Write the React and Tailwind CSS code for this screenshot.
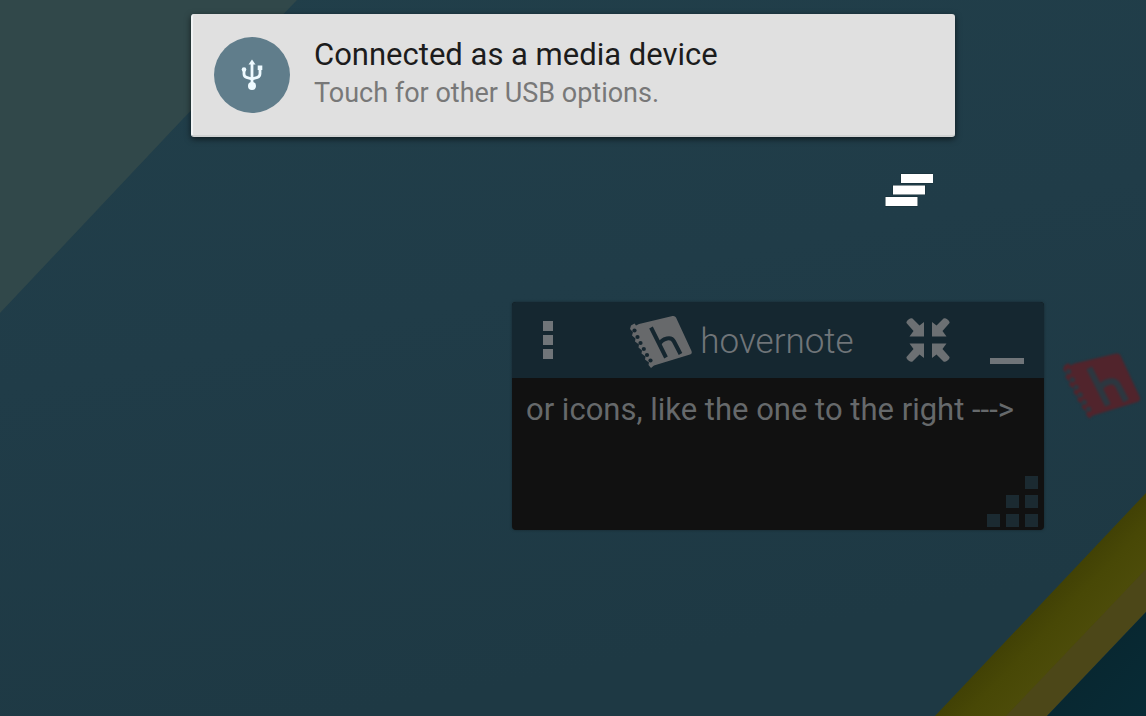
import React from "react";

function Wallpaper() {
  return (
    <svg
      className="absolute inset-0 h-full w-full"
      viewBox="0 0 1146 716"
      preserveAspectRatio="xMidYMid slice"
      aria-hidden="true"
    >
      <defs>
        <linearGradient id="sea" x1="0" y1="0" x2="0.3" y2="1">
          <stop offset="0" stopColor="#213f4a" />
          <stop offset="0.5" stopColor="#203c48" />
          <stop offset="1" stopColor="#1e3944" />
        </linearGradient>
        <linearGradient id="band" gradientUnits="userSpaceOnUse" x1="1030" y1="610" x2="1085" y2="662">
          <stop offset="0" stopColor="#404005" />
          <stop offset="0.35" stopColor="#484806" />
          <stop offset="1" stopColor="#4f4e0b" />
        </linearGradient>
        <linearGradient id="deep" x1="0" y1="0" x2="1" y2="1">
          <stop offset="0" stopColor="#08242c" />
          <stop offset="1" stopColor="#082b36" />
        </linearGradient>
      </defs>
      <rect width="1146" height="716" fill="url(#sea)" />
      <path d="M0 0H297L180 122L0 313Z" fill="#31484a" />
      <path d="M1146 493V572L1007 716H935Z" fill="url(#band)" />
      <path d="M1146 569V612L1047 716H1006Z" fill="#4c4718" />
      <path d="M1146 612V716H1047Z" fill="url(#deep)" />
    </svg>
  );
}

function UsbIcon() {
  return (
    <svg className="h-8 w-6" viewBox="0 0 24 32" fill="none" stroke="#eefaff" strokeWidth="2.8" aria-hidden="true">
      <path d="M12 4V27M4 10.500V15Q4 17.500 6.500 18.300L12 20M20 10V14.500Q20 17.500 17.500 18.300L12 20" />
      <circle cx="12" cy="27" r="4" fill="#eefaff" stroke="none" />
      <path d="M12 .5L15.500 5.500H8.500Z" fill="#eefaff" stroke="none" />
      <circle cx="4" cy="10.500" r="2.300" fill="#eefaff" stroke="none" />
      <path d="M17.700 6.500H22.300V11H17.700Z" fill="#eefaff" stroke="none" />
    </svg>
  );
}

function Notification() {
  return (
    <button
      type="button"
      className="flex w-full items-start gap-6 rounded-[3px] border-l-2 border-b-2 border-l-[#f0f3f4] border-b-[#d0d2d2] bg-[#e0e0e0] px-[21px] pt-[23px] pb-[22px] text-left shadow-[0_2px_6px_rgba(0,0,0,0.6)]"
    >
      <span className="flex size-19 shrink-0 items-center justify-center rounded-full bg-[#607d8b]">
        <UsbIcon />
      </span>
      <span className="flex flex-col">
        <span className="text-[31px] leading-9 text-[#1c1c1c]">Connected as a media device</span>
        <span className="text-[27px] leading-10 text-[#787878]">Touch for other USB options.</span>
      </span>
    </button>
  );
}

function ClearAllIcon() {
  return (
    <svg className="h-9 w-12" viewBox="0 0 48 36" aria-hidden="true">
      <g fill="#fff" stroke="#142c35" strokeWidth="1" paintOrder="stroke">
        <rect x="16" y="1" width="32" height="9" />
        <rect x="8" y="12.500" width="32" height="9" />
        <rect x="0.500" y="24" width="32" height="9" />
      </g>
    </svg>
  );
}

function NotebookIcon({ className, page, ink, inkWidth }) {
  const holes = [[4.5, 16.5], [7.5, 23], [10.500, 29], [13.800, 35], [17, 41], [20.500, 46.500]];
  return (
    <svg className={className} viewBox="0 0 64 56" aria-hidden="true">
      <path d="M9 10L42.500 2Q45 1.500 46 3.500L61.500 37Q62.500 39.500 60 40.500L24 51.500L21 54L18.500 51L19 48.500L15 45.500L15.500 42.500L11.500 39.500L12 36.500L8.500 33.500L9 30.500L5 27.500L5.500 24.500L2 21.500L3 18L0 15L1 11.500L4.500 9.500L6 11.500Z" fill={page} />
      <g fill={ink}>
        {holes.map(([x, y]) => (
          <circle key={y} cx={x} cy={y} r="2.100" />
        ))}
      </g>
      <path d="M21 13.500L36 43.500M29.500 30.500Q31 26 37 24.500Q42 23.500 44 27.500L50.500 40" fill="none" stroke={ink} strokeWidth={inkWidth} />
    </svg>
  );
}

function CollapseIcon() {
  const arrow = "M0.500 5Q0 3.500 2.500 1.500Q5 -0.500 6.500 0.500L13.500 7.500L18 4V18.500H3.500L7.500 13Z";
  return (
    <svg className="size-11" viewBox="0 0 44 44" fill="#6c7073" aria-hidden="true">
      <path d={arrow} />
      <path d={arrow} transform="translate(44 0) scale(-1 1)" />
      <path d={arrow} transform="translate(0 44) scale(1 -1)" />
      <path d={arrow} transform="translate(44 44) scale(-1 -1)" />
    </svg>
  );
}

function ResizeGrip() {
  const cells = [[38, 0], [19, 19], [38, 19], [0, 38], [19, 38], [38, 38]];
  return (
    <svg className="size-[52px]" viewBox="0 0 52 52" fill="#1b2a31" aria-hidden="true">
      {cells.map(([x, y]) => (
        <rect key={`${x}-${y}`} x={x} y={y} width="13" height="13" />
      ))}
    </svg>
  );
}

function NoteWindow() {
  return (
    <section
      aria-label="hovernote"
      className="absolute top-[302px] left-[512px] w-[532px] overflow-hidden rounded-[4px] bg-[#111111] shadow-[0_0_3px_rgba(0,0,0,0.35)]"
    >
      <header className="flex h-19 items-center bg-[#152730] pr-[18px] pl-7">
        <button type="button" aria-label="Menu" className="flex w-4 flex-col items-center gap-1">
          <span className="size-[10px] bg-[#707579]" />
          <span className="size-[10px] bg-[#707579]" />
          <span className="size-[10px] bg-[#707579]" />
        </button>
        <div className="flex flex-1 items-center justify-center gap-1.5 pt-1 pl-[42px]">
          <NotebookIcon className="h-14 w-16" page="#67696b" ink="#15262f" inkWidth="4" />
          <h1 className="text-[35px] leading-10 font-light text-[#707579]">hovernote</h1>
        </div>
        <div className="flex items-center gap-10 pl-5">
          <button type="button" aria-label="Collapse">
            <CollapseIcon />
          </button>
          <button type="button" aria-label="Minimize" className="flex h-12 w-9 items-end">
            <span className="h-[6px] w-[34px] bg-[#707579]" />
          </button>
        </div>
      </header>
      <div className="grid h-38">
        <textarea
          aria-label="Note"
          defaultValue="or icons, like the one to the right --->"
          className="col-start-1 row-start-1 h-full w-full resize-none overflow-hidden bg-transparent px-[14px] pt-3 text-[31px] leading-10 text-[#66696b] outline-none"
        />
        <button type="button" aria-label="Resize" className="col-start-1 row-start-1 self-end justify-self-end pr-[5px] pb-0.5">
          <ResizeGrip />
        </button>
      </div>
    </section>
  );
}

export default function App() {
  return (
    <main className="relative min-h-screen overflow-hidden bg-[#203c48] font-[Roboto,sans-serif]">
      <Wallpaper />
      <div className="relative mx-auto flex w-2/3 flex-col gap-9 pt-[14px]">
        <Notification />
        <button type="button" aria-label="Clear all notifications" className="mr-[22px] self-end">
          <ClearAllIcon />
        </button>
      </div>
      <NoteWindow />
      <button type="button" aria-label="Open note" className="absolute top-[351px] left-[1063px]">
        <NotebookIcon className="h-[70px] w-20 blur-[1px]" page="#51242c" ink="#2c3740" inkWidth="5" />
      </button>
    </main>
  );
}
